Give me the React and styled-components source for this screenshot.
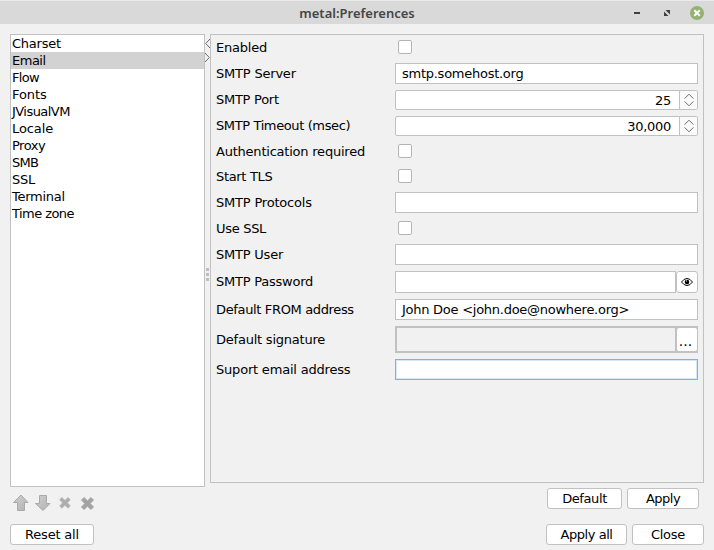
import React from "react";
import styled, { createGlobalStyle } from "styled-components";

const Global = createGlobalStyle`
  * { box-sizing: border-box; }
  html, body { margin: 0; background: #f1f1f1; }
  body { font: 13px/17px "DejaVu Sans", sans-serif; color: #000; overflow: hidden; }
`;

const Window = styled.div`
  width: 714px;
  height: 550px;
  display: flex;
  flex-direction: column;
  background: #f1f1f1;
`;
const TitleBar = styled.header`
  height: 24px;
  flex: none;
  display: grid;
  grid-template-columns: 1fr auto 1fr;
  align-items: center;
  background: #d9d9d9;
  border-top: 1px solid #e9e9e9;
`;
const Title = styled.h1`
  width: 116px;
  margin: 1px 0 0;
  font: 600 13px/17px "Noto Sans", sans-serif;
  white-space: nowrap;
  text-align: center;
  color: #464646;
`;
const TitleSpacer = styled.div``;
const WindowControls = styled.div`
  display: flex;
  justify-content: flex-end;
  padding-right: 10px;
`;
const Icon = styled.svg`
  display: block;
  flex: none;
`;
const Main = styled.main`
  display: flex;
  height: 453px;
  margin: 10px 10px 0;
`;
const CategoryList = styled.ul`
  width: 195px;
  height: 453px;
  margin: 0;
  padding: 0;
  list-style: none;
  background: #fff;
  border: 1px solid #c1c1c1;
`;
const Category = styled.li`
  height: 17px;
  padding-left: 1px;
  letter-spacing: ${(p) => p.$ls || 0}px;
  background: ${(p) => (p.$selected ? "#d2d2d2" : "transparent")};
`;
const Divider = styled.div`
  width: 5px;
`;
const Panel = styled.section`
  width: 494px;
  height: 449px;
  padding: 0 5px;
  border: 1px solid #c1c1c1;
`;
const Row = styled.div`
  display: flex;
  align-items: center;
  height: ${(p) => p.$h}px;
  margin-top: ${(p) => p.$gap}px;
`;
const Label = styled.label`
  width: 179px;
  flex: none;
  white-space: nowrap;
  padding-bottom: ${(p) => p.$lift || 0}px;
  letter-spacing: ${(p) => p.$ls || 0}px;
`;
const CheckBox = styled.span`
  width: 14px;
  height: 14px;
  margin-left: 3px;
  border: 1px solid #b5b5b5;
  border-radius: 2px;
  background: #fff;
`;
const Field = styled.div`
  flex: 1;
  min-width: 0;
  height: 100%;
  display: flex;
  align-items: center;
  padding-left: 6px;
  white-space: nowrap;
  letter-spacing: ${(p) => p.$ls || 0}px;
  background: ${(p) => (p.$disabled ? "#f1f1f1" : "#fff")};
  border: ${(p) => (p.$disabled ? 2 : 1)}px solid ${(p) => (p.$focus ? "#87afda" : "#c1c1c1")};
  border-right-width: 1px;
  box-shadow: ${(p) => (p.$focus ? "inset -1px -1px #d5e6f8, inset 1px 1px #d5e6f8" : "none")};
`;
const FramedGroup = styled.div`
  flex: 1;
  height: 100%;
  display: flex;
  background: #c1c1c1;
`;
const Spinner = styled.div`
  flex: 1;
  height: 100%;
  display: flex;
  background: #fff;
  border: 1px solid #c1c1c1;
  border-radius: 2px;
`;
const SpinnerValue = styled.span`
  flex: 1;
  padding: 1px 8px 0 0;
  text-align: right;
  line-height: 18px;
  letter-spacing: -0.3px;
`;
const SpinnerArrows = styled.span`
  width: 18px;
  display: flex;
  align-items: center;
  justify-content: center;
  border-left: 1px solid #c1c1c1;
  background: #fafafa;
`;
const SideButton = styled.button`
  width: 22px;
  height: 100%;
  padding: 0;
  display: flex;
  align-items: center;
  justify-content: center;
  font: inherit;
  color: #000;
  background: #fff;
  border: 1px solid #c1c1c1;
  border-radius: 3px;
`;
const BrowseButton = styled(SideButton)`
  height: 25px;
  margin-top: 1px;
  padding: 3px 3px 0 0;
  font-size: 14px;
`;
const ToolRow = styled.div`
  display: flex;
  justify-content: space-between;
  height: 28px;
  padding: 1px 15px 0 12px;
`;
const Tools = styled.div`
  padding-top: 6px;
`;
const Actions = styled.div`
  display: flex;
  gap: 5px;
`;
const Footer = styled.footer`
  display: flex;
  justify-content: space-between;
  padding: 9px 10px 0;
`;
const Button = styled.button`
  width: ${(p) => p.$w}px;
  height: 21px;
  padding: 0;
  font: inherit;
  line-height: 17px;
  letter-spacing: ${(p) => p.$ls || 0}px;
  color: #000;
  background: #fff;
  border: 1px solid #c1c1c1;
  border-radius: 3px;
`;

const categories = [
  ["Charset", -0.25],
  ["Email", -0.5],
  ["Flow", -0.65],
  ["Fonts", -0.1],
  ["JVisualVM", -0.55],
  ["Locale", -0.1],
  ["Proxy", -0.5],
  ["SMB", -0.7],
  ["SSL", -0.3],
  ["Terminal", -0.25],
  ["Time zone", -0.55],
];

const rows = [
  { label: "Enabled", ls: -0.2, kind: "check", gap: 5, h: 14 },
  { label: "SMTP Server", ls: -0.2, kind: "text", value: "smtp.somehost.org", gap: 9, h: 21 },
  { label: "SMTP Port", ls: -0.27, kind: "spin", value: "25", gap: 6, h: 20, lift: 1 },
  { label: "SMTP Timeout (msec)", ls: -0.38, kind: "spin", value: "30,000", gap: 6, h: 20, lift: 1 },
  { label: "Authentication required", ls: -0.22, kind: "check", gap: 8, h: 14 },
  { label: "Start TLS", ls: -0.33, kind: "check", gap: 11, h: 14 },
  { label: "SMTP Protocols", ls: -0.2, kind: "text", gap: 9, h: 21 },
  { label: "Use SSL", ls: -0.3, kind: "check", gap: 8, h: 14 },
  { label: "SMTP User", ls: -0.22, kind: "text", gap: 9, h: 21 },
  { label: "SMTP Password", ls: -0.23, kind: "password", gap: 6, h: 22, lift: 1 },
  { label: "Default FROM address", ls: -0.35, kind: "text", value: "John Doe <john.doe@nowhere.org>", gap: 6, h: 21 },
  { label: "Default signature", ls: -0.22, kind: "browse", gap: 6, h: 27 },
  { label: "Suport email address", ls: -0.2, kind: "focus", gap: 6, h: 21 },
];

const EyeIcon = () => (
  <Icon width="12" height="10" viewBox="0 0 12 10">
    <path d="M.5 5Q3 1.5 6 1.5T11.5 5Q9 8.5 6 8.5T.5 5Z" fill="#fff" stroke="#000" />
    <circle cx="6" cy="5" r="2.3" />
    <rect x="5" y="3.5" width="1" height="1" fill="#fff" />
  </Icon>
);
const SpinIcon = () => (
  <Icon width="10" height="14" viewBox="0 0 10 14" fill="none" stroke="#6c6c6c">
    <path d="M.6 5.6L5 1.2L9.4 5.6M.6 8.4L5 12.8L9.4 8.4" />
  </Icon>
);

function Control({ row }) {
  switch (row.kind) {
    case "check":
      return <CheckBox />;
    case "spin":
      return (
        <Spinner>
          <SpinnerValue>{row.value}</SpinnerValue>
          <SpinnerArrows><SpinIcon /></SpinnerArrows>
        </Spinner>
      );
    case "password":
      return (<><Field /><SideButton><EyeIcon /></SideButton></>);
    case "browse":
      return (<FramedGroup><Field $disabled /><BrowseButton>...</BrowseButton></FramedGroup>);
    default:
      return <Field $ls={-0.26} $focus={row.kind === "focus"}>{row.value}</Field>;
  }
}

const cross = "M3.5 1L7 4.3L10.5 1L13 3.5L9.7 7L13 10.5L10.5 13L7 9.7L3.5 13L1 10.5L4.3 7L1 3.5Z";

export default function App() {
  return (
    <Window>
      <Global />
      <TitleBar>
        <TitleSpacer />
        <Title>metal:Preferences</Title>
        <WindowControls>
          <Icon width="76" height="14" viewBox="0 0 76 14">
            <path d="M6 6h6v2H6z" fill="#404040" />
            <path d="M37.5 4h4.5v4.5zM36 5.5v4.5h4.5z" fill="#404040" />
            <circle cx="69" cy="7" r="7" fill="#92b372" />
            <path d="M66.3 4.3l5.4 5.4m0-5.4l-5.4 5.4" stroke="#fff" strokeWidth="2" />
          </Icon>
        </WindowControls>
      </TitleBar>
      <Main>
        <CategoryList>
          {categories.map(([name, ls]) => (
            <Category key={name} $ls={ls} $selected={name === "Email"}>{name}</Category>
          ))}
        </CategoryList>
        <Divider>
          <Icon width="5" height="453" viewBox="0 0 5 453">
            <path d="M5 5L.7 9.5L5 14M0 19L4.3 23.5L0 28" fill="none" stroke="#6c6c6c" />
            <path d="M1 234h3v3H1zM1 239h3v3H1zM1 244h3v3H1z" fill="#bdbdbd" />
          </Icon>
        </Divider>
        <Panel>
          {rows.map((r) => (
            <Row key={r.label} $gap={r.gap} $h={r.h}>
              <Label $ls={r.ls} $lift={r.lift}>{r.label}</Label>
              <Control row={r} />
            </Row>
          ))}
        </Panel>
      </Main>
      <ToolRow>
        <Tools>
          <Icon width="82" height="18" viewBox="0 0 82 18" stroke="#a9a9a9">
            <defs>
              <linearGradient id="metal" x1="0" y1="0" x2="1" y2="1">
                <stop offset="0" stopColor="#cfcfcf" />
                <stop offset="1" stopColor="#b2b2b2" />
              </linearGradient>
            </defs>
            <path fill="url(#metal)" d="M9 1L16 8.5H12.5V16.5H5.5V8.5H1.5Z" />
            <path fill="url(#metal)" d="M27.5 1.5H34.5V9.5H38L31 16.5L23.5 9.5H27.5Z" />
            <path fill="#adadad" stroke="#b5b5b5" d={cross} transform="translate(46.8 2.7) scale(.88)" />
            <path fill="#a3a3a3" d={cross} transform="translate(68.5 2.5)" />
          </Icon>
        </Tools>
        <Actions>
          <Button $w={75} $ls={-0.4}>Default</Button>
          <Button $w={72} $ls={-0.5}>Apply</Button>
        </Actions>
      </ToolRow>
      <Footer>
        <Button $w={84} $ls={-0.2}>Reset all</Button>
        <Actions>
          <Button $w={81} $ls={-0.45}>Apply all</Button>
          <Button $w={72} $ls={-0.3}>Close</Button>
        </Actions>
      </Footer>
    </Window>
  );
}
